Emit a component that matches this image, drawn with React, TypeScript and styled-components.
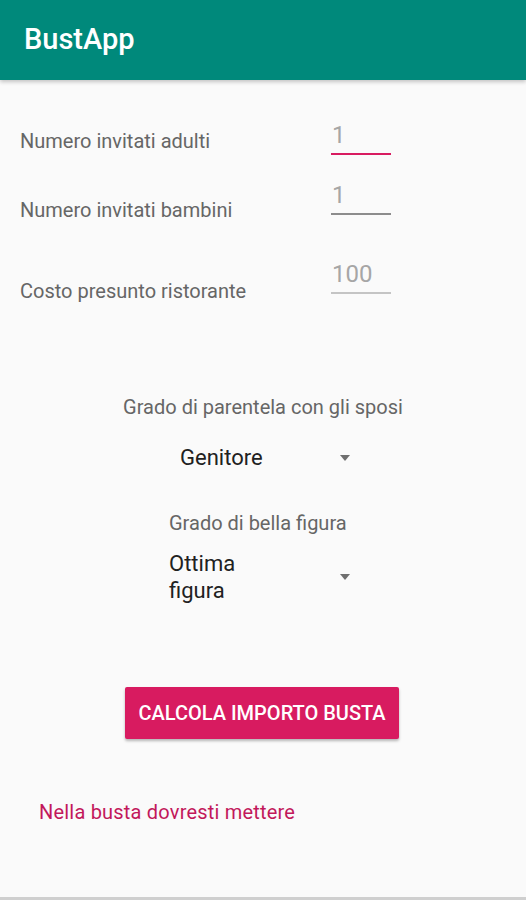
import React from "react";
import styled, { createGlobalStyle } from "styled-components";

const GlobalStyle = createGlobalStyle`
  html, body {
    margin: 0;
    padding: 0;
    background: #fafafa;
  }
  * {
    box-sizing: border-box;
  }
`;

const Screen = styled.div`
  width: 526px;
  height: 900px;
  display: flex;
  flex-direction: column;
  background: #fafafa;
  font-family: Roboto, "Liberation Sans", sans-serif;
  overflow: hidden;
`;

const AppBar = styled.header`
  height: 80px;
  flex-shrink: 0;
  display: flex;
  align-items: center;
  padding: 0 24px 2px;
  background: #00897b;
  color: #fff;
  font-size: 29px;
  font-weight: 500;
  box-shadow: 0 2px 4px rgba(0, 0, 0, 0.22);
  position: relative;
  z-index: 1;
`;

const Form = styled.div`
  display: flex;
  flex-direction: column;
  padding: 41px 0 0 20px;
`;

const Row = styled.div<{ $top: number }>`
  display: flex;
  align-items: flex-end;
  margin-top: ${(p) => p.$top}px;
`;

const Label = styled.div<{ $drop: number }>`
  flex: 0 0 311px;
  font-size: 20px;
  line-height: 23px;
  color: #666;
  margin-bottom: ${(p) => -p.$drop}px;
`;

const Field = styled.div<{ $line: string }>`
  width: 60px;
  font-size: 24px;
  line-height: 28px;
  color: #a6a6a6;
  padding: 0 0 4px 1px;
  border-bottom: 2px solid ${(p) => p.$line};
`;

const Section = styled.div`
  display: flex;
  flex-direction: column;
  align-items: center;
`;

const Caption = styled.div<{ $top: number; $left?: boolean }>`
  font-size: 20px;
  line-height: 23px;
  color: #666;
  margin-top: ${(p) => p.$top}px;
  width: ${(p) => (p.$left ? "192px" : "auto")};
  padding-left: ${(p) => (p.$left ? "2px" : "0")};
  text-align: ${(p) => (p.$left ? "left" : "center")};
`;

const Spinner = styled.div<{ $top: number }>`
  width: 192px;
  margin-top: ${(p) => p.$top}px;
  padding-right: 9px;
  display: flex;
  align-items: center;
  justify-content: space-between;
`;

const SpinnerText = styled.div<{ $indent: number }>`
  width: 110px;
  padding-left: ${(p) => p.$indent}px;
  font-size: 22px;
  line-height: 27px;
  color: #212121;
`;

const Arrow = styled.div`
  width: 0;
  height: 0;
  border-left: 5.5px solid transparent;
  border-right: 5.5px solid transparent;
  border-top: 6px solid #6f6f6f;
`;

const CalcButton = styled.button`
  margin-top: 83px;
  width: 274px;
  height: 52px;
  align-self: center;
  margin-left: -2px;
  border: none;
  border-radius: 2px;
  background: #d81b60;
  color: #fff;
  font-family: Roboto, "Liberation Sans", sans-serif;
  font-size: 20px;
  font-weight: 500;
  box-shadow: 0 2px 3px rgba(0, 0, 0, 0.28);
  padding: 0;
`;

const Result = styled.div`
  margin-top: 61px;
  padding-left: 39px;
  font-size: 20px;
  line-height: 24px;
  letter-spacing: 0.2px;
  color: #c2185b;
`;

const BottomEdge = styled.div`
  margin-top: auto;
  height: 3px;
  background: #cfcfcf;
`;

const fields = [
  { label: "Numero invitati adulti", value: "1", line: "#d81b60", top: 0, drop: -2 },
  { label: "Numero invitati bambini", value: "1", line: "#8c8c8c", top: 26, drop: 7 },
  { label: "Costo presunto ristorante", value: "100", line: "#c4c4c4", top: 45, drop: 9 },
];

export default function App() {
  return (
    <Screen>
      <GlobalStyle />
      <AppBar>BustApp</AppBar>

      <Form>
        {fields.map((f) => (
          <Row key={f.label} $top={f.top}>
            <Label $drop={f.drop}>{f.label}</Label>
            <Field $line={f.line}>{f.value}</Field>
          </Row>
        ))}
      </Form>

      <Section>
        <Caption $top={102}>Grado di parentela con gli sposi</Caption>
        <Spinner $top={25}>
          <SpinnerText $indent={13}>Genitore</SpinnerText>
          <Arrow />
        </Spinner>

        <Caption $top={41} $left>
          Grado di bella figura
        </Caption>
        <Spinner $top={15}>
          <SpinnerText $indent={2}>Ottima figura</SpinnerText>
          <Arrow />
        </Spinner>

        <CalcButton>CALCOLA IMPORTO BUSTA</CalcButton>
      </Section>

      <Result>Nella busta dovresti mettere</Result>

      <BottomEdge />
    </Screen>
  );
}
